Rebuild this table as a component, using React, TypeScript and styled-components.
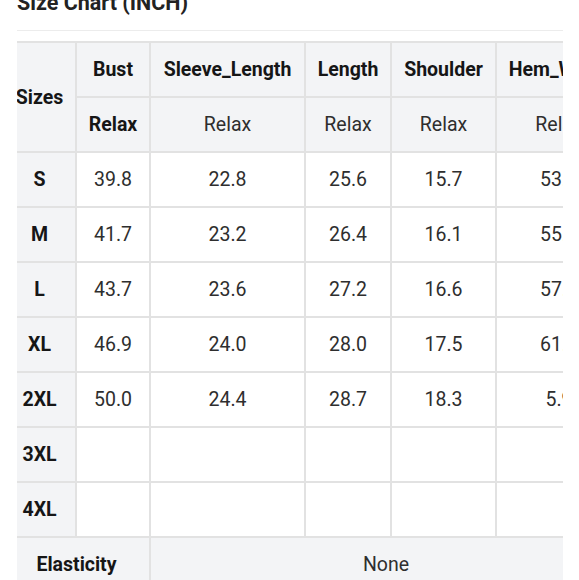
import * as React from 'react';
import styled, { createGlobalStyle } from 'styled-components';

const GlobalStyle = createGlobalStyle`
  html, body {
    margin: 0;
    padding: 0;
    background: #ffffff;
    overflow: hidden;
  }
  body {
    font-family: Roboto, "Liberation Sans", Arial, sans-serif;
  }
`;

const Page = styled.div`
  padding: 0 16px 0 17px;
`;

const Title = styled.h2`
  margin: -9px 0 0;
  font-size: 21.5px;
  line-height: 24px;
  font-weight: 700;
  color: #222222;
`;

const Divider = styled.div`
  height: 1px;
  margin-top: 15px;
  background: #ececec;
`;

const ScrollBox = styled.div`
  margin-top: 10px;
  overflow: hidden;
`;

const Grid = styled.div`
  display: grid;
  width: max-content;
  margin-left: -15px;
  grid-template-columns: 71px 72px 153px 84px 103px 124px;
  grid-auto-rows: 53px;
  gap: 2px;
  padding: 2px;
  background: #e2e2e2;
`;

const Cell = styled.div<{ $head?: boolean; $bold?: boolean; $rows?: number; $cols?: number }>`
  display: flex;
  align-items: center;
  justify-content: center;
  white-space: nowrap;
  overflow: hidden;
  font-size: 19.5px;
  font-weight: ${(p) => (p.$bold ? 700 : 400)};
  color: ${(p) => (p.$bold ? '#161616' : '#2e2e2e')};
  background: ${(p) => (p.$head ? '#f3f4f6' : '#ffffff')};
  grid-row: span ${(p) => p.$rows ?? 1};
  grid-column: span ${(p) => p.$cols ?? 1};
`;

const measures = ['Bust', 'Sleeve_Length', 'Length', 'Shoulder', 'Hem_Width'];

const rows: [string, string[]][] = [
  ['S', ['39.8', '22.8', '25.6', '15.7', '53.1']],
  ['M', ['41.7', '23.2', '26.4', '16.1', '55.1']],
  ['L', ['43.7', '23.6', '27.2', '16.6', '57.1']],
  ['XL', ['46.9', '24.0', '28.0', '17.5', '61.0']],
  ['2XL', ['50.0', '24.4', '28.7', '18.3', '5.9']],
  ['3XL', ['', '', '', '', '']],
  ['4XL', ['', '', '', '', '']],
];

export default function App(): JSX.Element {
  return (
    <Page>
      <GlobalStyle />
      <Title>Size Chart (INCH)</Title>
      <Divider />
      <ScrollBox>
        <Grid>
          <Cell $head $bold $rows={2}>Sizes</Cell>
          {measures.map((m) => (
            <Cell key={m} $head $bold>{m}</Cell>
          ))}
          {measures.map((m, i) => (
            <Cell key={`relax-${m}`} $head $bold={i === 0}>Relax</Cell>
          ))}
          {rows.map(([size, values]) => (
            <React.Fragment key={size}>
              <Cell $head $bold>{size}</Cell>
              {values.map((v, i) => (
                <Cell key={i}>{v}</Cell>
              ))}
            </React.Fragment>
          ))}
          <Cell $head $bold $cols={2}>Elasticity</Cell>
          <Cell $head $cols={4}>None</Cell>
        </Grid>
      </ScrollBox>
    </Page>
  );
}
